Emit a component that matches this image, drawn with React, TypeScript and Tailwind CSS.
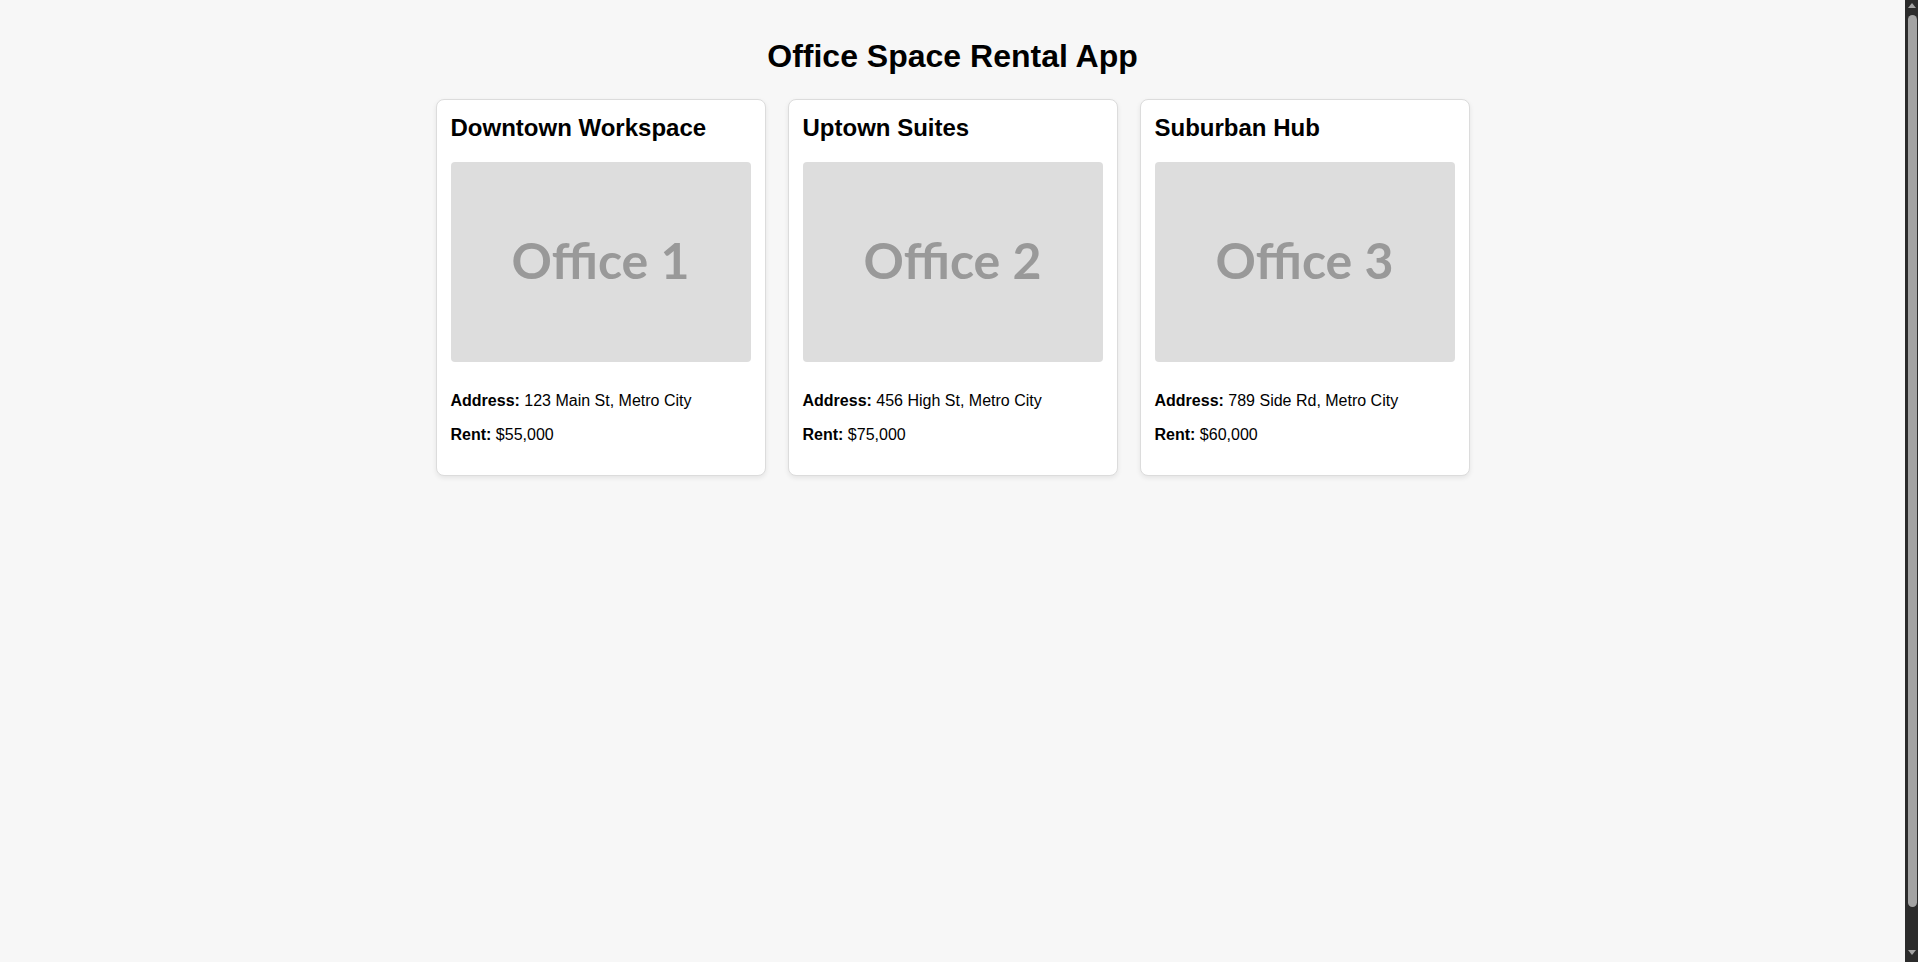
import { ReactNode } from "react"

interface Office {
  id: number
  name: string
  address: string
  rent: string
}

const offices: Office[] = [
  { id: 1, name: "Downtown Workspace", address: "123 Main St, Metro City", rent: "$55,000" },
  { id: 2, name: "Uptown Suites", address: "456 High St, Metro City", rent: "$75,000" },
  { id: 3, name: "Suburban Hub", address: "789 Side Rd, Metro City", rent: "$60,000" },
]

export default function App() {
  return (
    <div className="box-content min-h-screen bg-[#f7f7f7] py-[20px] pr-[33px] pl-[20px] font-['Liberation_Sans',Arial,sans-serif] text-black">
      <h1 className="mt-[18px] mb-[24px] text-center text-[32px] leading-[37px] font-bold">
        Office Space Rental App
      </h1>

      <div className="flex justify-center gap-[22px]">
        {offices.map((office) => (
          <OfficeCard key={office.id} office={office} />
        ))}
      </div>

      <Scrollbar />
    </div>
  )
}

function OfficeCard({ office }: { office: Office }) {
  return (
    <div className="w-[330px] rounded-lg border border-[#dcdcdc] bg-white px-[14px] pt-[14px] pb-[15px] shadow-[0_2px_5px_rgba(0,0,0,0.08)]">
      <h2 className="text-[24px] leading-[28px] font-bold">{office.name}</h2>

      <div className="mt-[20px] flex h-[200px] w-[300px] items-center justify-center rounded-[4px] bg-[#dddddd] pb-[5px]">
        <span className="font-['Lato',sans-serif] text-[50px] leading-none font-bold text-[#999999]">
          Office {office.id}
        </span>
      </div>

      <div className="mt-[30px]">
        <Detail label="Address:">{office.address}</Detail>
        <Detail label="Rent:">{office.rent}</Detail>
      </div>
    </div>
  )
}

function Detail(props: { label: string; children: ReactNode }) {
  return (
    <p className="mb-[16px] text-[16px] leading-[18px]">
      <strong className="font-bold">{props.label}</strong> {props.children}
    </p>
  )
}

function Scrollbar() {
  return (
    <div className="fixed top-0 right-0 flex h-screen w-[13px] flex-col bg-[#2b2b2b] pl-[3px]">
      <div className="mt-[3px] h-0 w-0 border-x-[4px] border-b-[5px] border-x-transparent border-b-[#a3a3a3]" />
      <div className="mt-[7px] h-[892px] w-[9px] rounded-full bg-[#a3a3a3]" />
      <div className="mt-auto mb-[7px] h-0 w-0 border-x-[4px] border-t-[5px] border-x-transparent border-t-[#a3a3a3]" />
    </div>
  )
}
